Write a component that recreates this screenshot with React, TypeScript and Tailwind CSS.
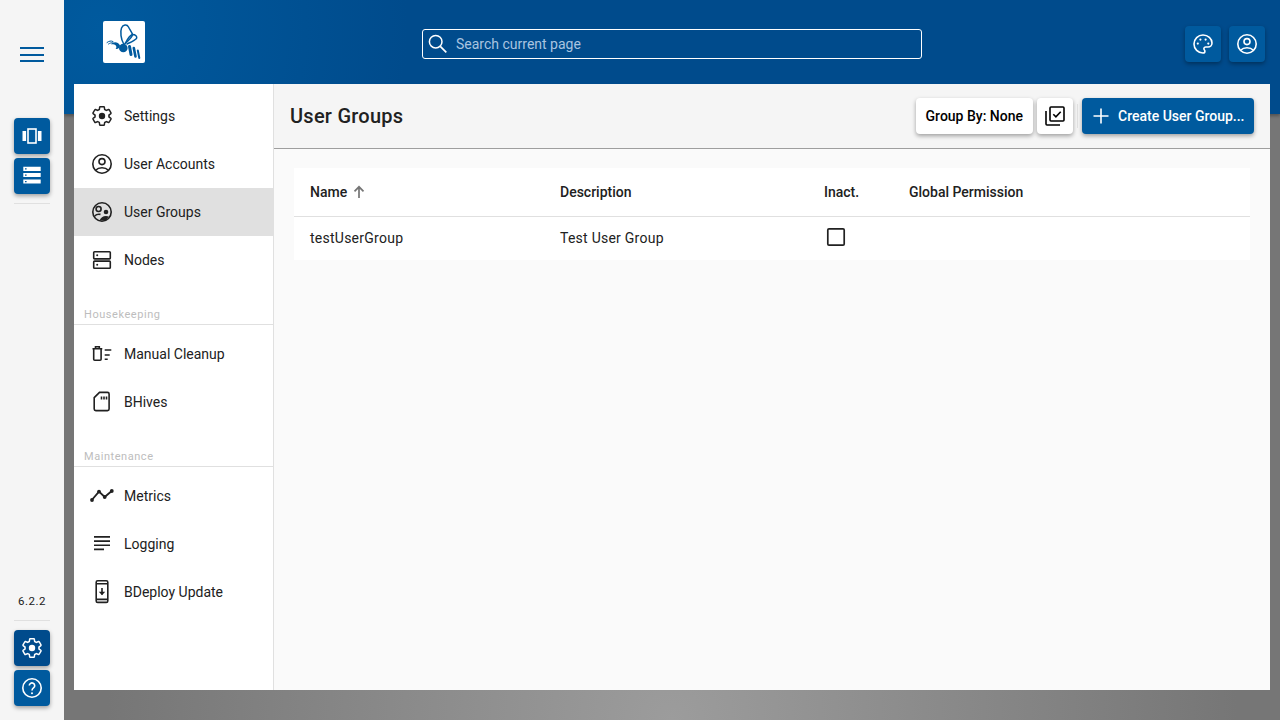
import React from 'react';

const GEAR =
  'M19.43 12.98c.04-.32.07-.64.07-.98 0-.34-.03-.66-.07-.98l2.11-1.65c.19-.15.24-.42.12-.64l-2-3.46c-.09-.16-.26-.25-.44-.25-.06 0-.12.01-.17.03l-2.49 1c-.52-.4-1.08-.73-1.69-.98l-.38-2.65C14.46 2.18 14.25 2 14 2h-4c-.25 0-.46.18-.49.42l-.38 2.65c-.61.25-1.17.59-1.69.98l-2.49-1c-.06-.02-.12-.03-.18-.03-.17 0-.34.09-.43.25l-2 3.46c-.13.22-.07.49.12.64l2.11 1.65c-.04.32-.07.65-.07.98 0 .33.03.66.07.98l-2.11 1.65c-.19.15-.24.42-.12.64l2 3.46c.09.16.26.25.44.25.06 0 .12-.01.17-.03l2.49-1c.52.4 1.08.73 1.69.98l.38 2.65c.03.24.24.42.49.42h4c.25 0 .46-.18.49-.42l.38-2.65c.61-.25 1.17-.59 1.69-.98l2.49 1c.06.02.12.03.18.03.17 0 .34-.09.43-.25l2-3.46c.12-.22.07-.49-.12-.64l-2.11-1.65z';

function Icon({ children }: { children: React.ReactNode }) {
  return (
    <svg className="w-6 h-6" viewBox="0 0 24 24" fill="none" stroke="currentColor" strokeWidth={1.6}>
      {children}
    </svg>
  );
}

const GearIcon = () => (
  <Icon>
    <path d={GEAR} transform="translate(12 12) scale(.93) translate(-12 -12)" />
    <circle cx="12" cy="12" r="3.2" fill="currentColor" stroke="none" />
  </Icon>
);

const AccountIcon = () => (
  <Icon>
    <circle cx="12" cy="12" r="9.2" />
    <circle cx="12" cy="9.6" r="3" />
    <path d="M5.6 18.2C7.2 16.6 9.4 15.8 12 15.8s4.8.8 6.4 2.4" />
  </Icon>
);

const GroupsIcon = () => (
  <Icon>
    <circle cx="12" cy="12" r="9.2" />
    <circle cx="8.6" cy="9" r="2.5" />
    <circle cx="16" cy="12" r="2.3" fill="currentColor" stroke="none" />
    <path d="M4.8 16C6 14.6 8.4 14 10.5 14.4" />
    <path d="M9.5 20.6C10.5 17.8 13 16 16 16c1 0 2 .2 2.8.6l-3 4z" fill="currentColor" stroke="none" />
  </Icon>
);

const NodesIcon = () => (
  <Icon>
    <rect x="3.7" y="3.7" width="16.6" height="7.2" rx="0.8" />
    <rect x="3.7" y="13.1" width="16.6" height="7.2" rx="0.8" />
    <circle cx="7.2" cy="7.3" r="1" fill="currentColor" stroke="none" />
    <circle cx="7.2" cy="16.7" r="1" fill="currentColor" stroke="none" />
  </Icon>
);

const CleanupIcon = () => (
  <Icon>
    <path d="M2.5 6.7h9.8M5.5 6.7V4.8h3.8v1.9" />
    <path d="M3.7 6.7v10.6c0 .6.4 1 1 1h5.4c.6 0 1-.4 1-1V6.7" />
    <path d="M14.7 8h6.6M14.7 13h5M14.7 17.3h3" />
  </Icon>
);

const CardIcon = () => (
  <Icon>
    <path d="M9.5 2.4h8c.9 0 1.6.7 1.6 1.6v15c0 .9-.7 1.6-1.6 1.6H5.8c-.9 0-1.6-.7-1.6-1.6V7.7z" />
    <path d="M11.5 6.4v3.2M14 6.4v3.2M16.5 6.4v3.2" />
  </Icon>
);

const MetricsIcon = () => (
  <Icon>
    <path d="M1.8 16L9 7.6l5.7 5.4 7-6" strokeWidth={1.8} />
    <g fill="currentColor" stroke="none">
      <circle cx="2" cy="16" r="1.9" />
      <circle cx="9" cy="7.6" r="1.9" />
      <circle cx="14.7" cy="13" r="1.9" />
      <circle cx="21.8" cy="7" r="1.9" />
    </g>
  </Icon>
);

const LoggingIcon = () => (
  <Icon>
    <path d="M4 4.9h16M4 9.1h16M4 13.2h16M4 17.4h10" />
  </Icon>
);

const UpdateIcon = () => (
  <Icon>
    <rect x="6.2" y="0.8" width="11.6" height="21.6" rx="1.5" />
    <path d="M6.2 3.8h11.6M6.2 19.4h11.6" />
    <path d="M12 8v6.5" />
    <path d="M8.8 11.8L12 15.2l3.2-3.4z" fill="currentColor" stroke="none" />
  </Icon>
);

function BeeLogo() {
  return (
    <svg className="w-[42px] h-[42px]" viewBox="0 0 42 42" fill="none">
      <rect width="42" height="42" rx="2" fill="#fff" />
      <g stroke="#005a9e" strokeWidth="1.5" strokeLinecap="round">
        <path d="M20.5 22.5C18 18 17 11 18.5 7C20 3.5 24 3 25.5 6C27 9 29 11.5 29.5 13.5C29.5 16 25 20 22 22.5" />
        <path d="M22.5 22C24.5 18 26.5 14.5 29.5 13.5C32.5 13.5 34.5 15.5 33.5 17.5C31 20 27 21.5 24 23" />
        <path d="M10 20.5C8 19.5 6 20 4 21.5" strokeWidth="1" />
        <path d="M10 22C8.5 21.5 7 22 5.5 23" strokeWidth="1" />
      </g>
      <g fill="#005a9e">
        <path d="M8 23.5C10 20.5 15 20.5 17 24.5C17 27 15 28.5 12.5 28C14 26.5 13.5 24 11 23.5C10 23.3 9 23.3 8 23.5Z" />
        <circle cx="20.3" cy="27" r="4.3" />
      </g>
      <g stroke="#005a9e" strokeLinecap="round">
        <path d="M26.5 25.5L28 33.5" strokeWidth="3" />
        <path d="M30.8 27L32.5 35.5" strokeWidth="2.6" />
        <path d="M34.8 29.5L36.3 37" strokeWidth="2" />
      </g>
    </svg>
  );
}

function RailButton({ children, active }: { children: React.ReactNode; active?: boolean }) {
  return (
    <button
      className={`w-9 h-9 rounded flex items-center justify-center text-white shadow-[0_2px_4px_rgba(0,0,0,0.35)] ${
        active ? 'bg-[#004b8c]' : 'bg-[#005a9e]'
      }`}
    >
      {children}
    </button>
  );
}

interface NavItemProps {
  icon: React.ReactNode;
  label: string;
  active?: boolean;
}

function NavItem({ icon, label, active }: NavItemProps) {
  return (
    <div className={`h-12 flex items-center pl-4 gap-[10px] ${active ? 'bg-[#e0e0e0]' : ''}`}>
      <span className="w-6 h-6 flex items-center justify-center text-[#212121]">{icon}</span>
      <span className="text-sm text-[#212121]">{label}</span>
    </div>
  );
}

function NavSection({ title }: { title: string }) {
  return (
    <div className="mt-[16px] h-[25px] flex items-end pl-[10px] pb-[1px] border-b border-[#e0e0e0] text-[11px] tracking-[0.55px] text-[#bdbdbd]">
      {title}
    </div>
  );
}

export default function App() {
  return (
    <div className="w-[1280px] h-[720px] flex overflow-hidden font-['Roboto',sans-serif] text-[#212121]">
      <aside className="w-16 shrink-0 bg-[#f5f5f5] flex flex-col items-center z-10">
        <div className="mt-[47px] w-6 flex flex-col gap-[4.5px]">
          <div className="h-[2px] bg-[#005a9e]" />
          <div className="h-[2px] bg-[#005a9e]" />
          <div className="h-[2px] bg-[#005a9e]" />
        </div>
        <div className="mt-[56px] flex flex-col gap-1">
          <RailButton>
            <Icon>
              <rect x="8" y="5" width="8" height="14" />
              <rect x="2.5" y="7" width="3.6" height="10" fill="currentColor" stroke="none" />
              <rect x="17.9" y="7" width="3.6" height="10" fill="currentColor" stroke="none" />
            </Icon>
          </RailButton>
          <RailButton>
            <svg className="w-6 h-6" viewBox="0 0 24 24" fill="currentColor">
              <path
                fillRule="evenodd"
                d="M3.3 2.7h17.4V7H3.3zM5 4.2v1.3h1.6V4.2zM3.3 9h17.4v4H3.3zM5 10.4v1.3h1.6v-1.3zM3.3 15.6h17.4v4H3.3zM5 17v1.3h1.6V17z"
              />
            </svg>
          </RailButton>
        </div>
        <div className="mt-[9px] w-9 h-px bg-[#e0e0e0]" />
        <div className="mt-auto text-[11.5px] tracking-[0.5px] text-[#212121] mb-[10px]">6.2.2</div>
        <div className="w-9 h-px bg-[#e0e0e0] mb-[9px]" />
        <div className="flex flex-col gap-1 mb-[14px]">
          <RailButton active>
            <GearIcon />
          </RailButton>
          <RailButton>
            <Icon>
              <circle cx="12" cy="12" r="9.2" />
              <path d="M9.3 9.6a2.7 2.7 0 1 1 4.4 2.1c-1.1.9-1.7 1.4-1.7 2.8" />
              <circle cx="12" cy="17.2" r="1" fill="currentColor" stroke="none" />
            </Icon>
          </RailButton>
        </div>
      </aside>

      <div className="flex-1 flex flex-col bg-[radial-gradient(circle_at_50%_100%,#9c9c9c_0%,#767676_60%)]">
        <header className="h-[114px] shrink-0 bg-[radial-gradient(circle_at_3%_25%,#005a9e_0%,#004b8c_26%)] shadow-[0_2px_3px_rgba(0,0,0,0.3)] flex items-start">
          <div className="h-[88px] w-full flex items-center pl-[39px] pr-[15px]">
            <div className="-mt-1">
              <BeeLogo />
            </div>
            <div className="ml-[277px] w-[500px] h-[30px] border border-white rounded-[3px] flex items-center pl-[3px] gap-[6px]">
              <svg className="w-6 h-6 text-white" viewBox="0 0 24 24" fill="none" stroke="currentColor" strokeWidth={1.5}>
                <circle cx="9.7" cy="9.7" r="6.3" />
                <path d="M14.3 14.3l6 6" strokeWidth={1.7} />
              </svg>
              <span className="text-sm text-[#a9c4e0]">Search current page</span>
            </div>
            <div className="ml-auto flex gap-2">
              <RailButton>
                <Icon>
                  <path d="M12 3a9 9 0 0 0 0 18c1.1 0 1.9-.8 1.9-1.8 0-.5-.2-.9-.5-1.2-.3-.4-.5-.8-.5-1.2 0-1 .8-1.8 1.8-1.8H17c2.2 0 4-1.8 4-4C21 6.5 17 3 12 3z" />
                  <g fill="currentColor" stroke="none">
                    <circle cx="6.8" cy="11.6" r="1.1" />
                    <circle cx="9.4" cy="7.6" r="1.1" />
                    <circle cx="14.6" cy="7.6" r="1.1" />
                    <circle cx="17.3" cy="11.6" r="1.1" />
                  </g>
                </Icon>
              </RailButton>
              <RailButton>
                <AccountIcon />
              </RailButton>
            </div>
          </div>
        </header>

        <main className="-mt-[30px] mx-[10px] h-[606px] flex bg-[#fafafa] z-10">
          <nav className="w-[200px] shrink-0 bg-white border-r border-[#e0e0e0] pt-2">
            <NavItem icon={<GearIcon />} label="Settings" />
            <NavItem icon={<AccountIcon />} label="User Accounts" />
            <NavItem icon={<GroupsIcon />} label="User Groups" active />
            <NavItem icon={<NodesIcon />} label="Nodes" />
            <NavSection title="Housekeeping" />
            <div className="mt-[5px]">
              <NavItem icon={<CleanupIcon />} label="Manual Cleanup" />
              <NavItem icon={<CardIcon />} label="BHives" />
            </div>
            <NavSection title="Maintenance" />
            <div className="mt-[5px]">
              <NavItem icon={<MetricsIcon />} label="Metrics" />
              <NavItem icon={<LoggingIcon />} label="Logging" />
              <NavItem icon={<UpdateIcon />} label="BDeploy Update" />
            </div>
          </nav>

          <section className="flex-1 flex flex-col">
            <div className="h-[65px] shrink-0 bg-[#f5f5f5] border-b border-[#9e9e9e] flex items-center pl-4 pr-4">
              <h1 className="text-xl font-medium tracking-[0.25px] text-[#212121]">User Groups</h1>
              <div className="ml-auto flex items-center">
                <button className="h-9 px-[10px] bg-white rounded text-sm font-medium text-black shadow-[0_2px_4px_rgba(0,0,0,0.35)]">
                  Group By: None
                </button>
                <button className="ml-1 w-9 h-9 bg-white rounded flex items-center justify-center text-black shadow-[0_2px_4px_rgba(0,0,0,0.35)]">
                  <Icon>
                    <rect x="7" y="3" width="14" height="14" rx="1" />
                    <path d="M3 7v13a1 1 0 0 0 1 1h13" />
                    <path d="M10.3 10.3l2.6 2.6 4.8-5.2" />
                  </Icon>
                </button>
                <div className="ml-1 w-px h-6 bg-[#e0e0e0]" />
                <button className="ml-1 h-9 w-[172px] bg-[#005a9e] rounded flex items-center pl-[7px] gap-[5px] text-sm font-medium text-white shadow-[0_2px_4px_rgba(0,0,0,0.35)]">
                  <Icon>
                    <path d="M12 4.5v15M4.5 12h15" />
                  </Icon>
                  Create User Group...
                </button>
              </div>
            </div>

            <div className="mt-[19px] mx-5 bg-white">
              <div className="h-[49px] border-b border-[#e0e0e0] grid grid-cols-[250px_264px_85px_1fr] items-center px-4 text-sm font-medium">
                <div className="flex items-center gap-1">
                  Name
                  <svg className="w-4 h-4 text-[#757575]" viewBox="0 0 16 16" fill="none" stroke="currentColor" strokeWidth={1.7}>
                    <path d="M8 14V2.8M3.5 7.3L8 2.8l4.5 4.5" />
                  </svg>
                </div>
                <div>Description</div>
                <div>Inact.</div>
                <div>Global Permission</div>
              </div>
              <div className="h-[43px] pb-[2px] grid grid-cols-[250px_264px_85px_1fr] items-center px-4 text-sm tracking-[0.25px]">
                <div>testUserGroup</div>
                <div>Test User Group</div>
                <div className="-mt-[1px]">
                  <Icon>
                    <rect x="3.8" y="3.8" width="16.4" height="16.4" rx="1.2" strokeWidth={1.7} />
                  </Icon>
                </div>
                <div />
              </div>
            </div>
          </section>
        </main>
      </div>
    </div>
  );
}
